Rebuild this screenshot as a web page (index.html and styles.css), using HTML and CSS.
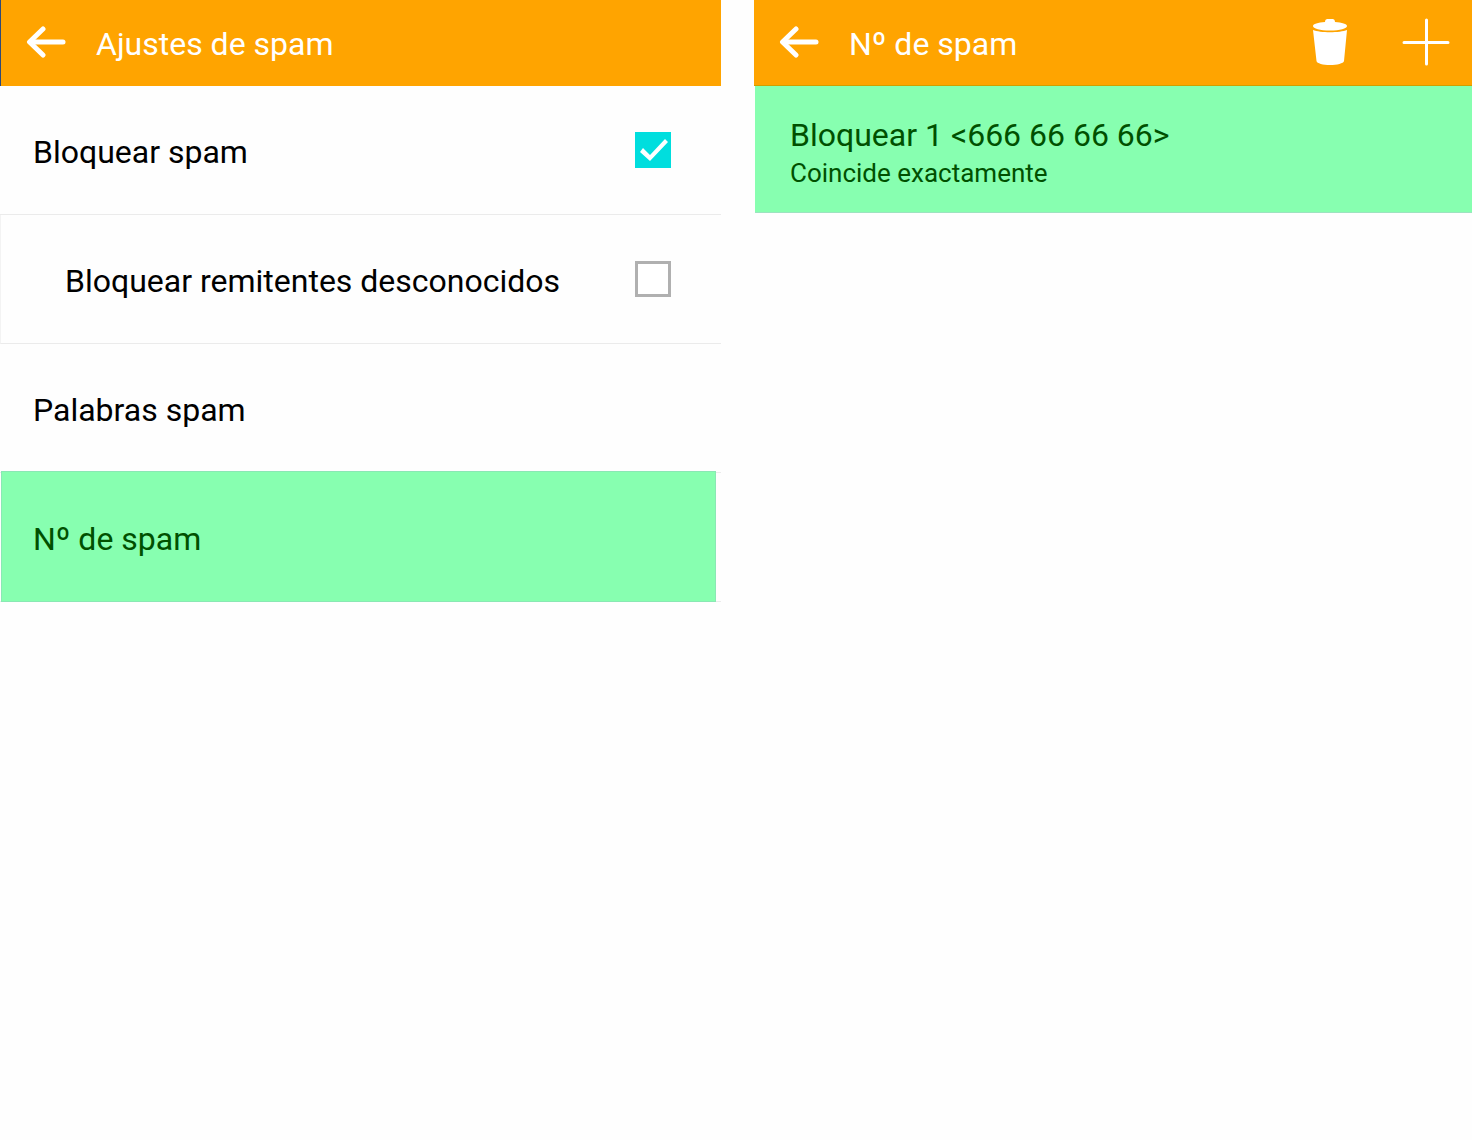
FILE: index.html
```html
<!DOCTYPE html>
<html lang="es">
<head>
    <meta charset="UTF-8">
    <meta name="viewport" content="width=device-width, initial-scale=1.0">
    <title>Ajustes de spam</title>
    <link rel="stylesheet" href="styles.css">
</head>
<body>
    <div class="screens">
        <section class="screen settings">
            <header class="bar">
                <button class="icon-button" type="button" aria-label="Atrás">
                    <svg width="40" height="32" viewBox="0 0 40 32" fill="none" stroke="#fff" stroke-linecap="round" stroke-linejoin="round">
                        <path d="M17 3 3.500 16 17 29" stroke-width="5"/>
                        <path d="M5 16H37" stroke-width="5"/>
                    </svg>
                </button>
                <h1>Ajustes de spam</h1>
            </header>
            <div class="row">
                <label for="block">Bloquear spam</label>
                <input class="check" type="checkbox" id="block" checked>
            </div>
            <div class="row row-nested">
                <label for="unknown">Bloquear remitentes desconocidos</label>
                <input class="check" type="checkbox" id="unknown">
            </div>
            <a class="row" href="#palabras">Palabras spam</a>
            <a class="row row-active" href="#numeros">Nº de spam</a>
        </section>

        <section class="screen numbers" id="numeros">
            <header class="bar">
                <button class="icon-button" type="button" aria-label="Atrás">
                    <svg width="40" height="32" viewBox="0 0 40 32" fill="none" stroke="#fff" stroke-linecap="round" stroke-linejoin="round">
                        <path d="M17 3 3.500 16 17 29" stroke-width="5"/>
                        <path d="M5 16H37" stroke-width="5"/>
                    </svg>
                </button>
                <h1>Nº de spam</h1>
                <div class="actions">
                    <button class="icon-button" type="button" aria-label="Eliminar">
                        <svg width="34" height="48" viewBox="0 0 34 48" fill="#fff">
                            <path d="M12 4C12 2 13 1 14.500 1H19.500C21 1 22 2 22 4C29 4.500 34 6 34 8C34 10.500 27 12.500 17 12.500S0 10.500 0 8C0 6 5 4.500 12 4Z"/>
                            <path d="M0 12C7 15 27 15 34 12L31 43C30.500 45.500 24 47 17 47S4 45.500 3.500 43Z"/>
                        </svg>
                    </button>
                    <button class="icon-button" type="button" aria-label="Añadir">
                        <svg width="48" height="48" viewBox="0 0 48 48" fill="none" stroke="#fff" stroke-width="3" stroke-linecap="round">
                            <path d="M24.500 2V46M2 24.500H46"/>
                        </svg>
                    </button>
                </div>
            </header>
            <a class="number" href="#numero-1">
                <span class="number-title">Bloquear 1 &lt;666 66 66 66&gt;</span>
                <span class="number-rule">Coincide exactamente</span>
            </a>
        </section>
    </div>
</body>
</html>
```
FILE: styles.css
```css
* {
    box-sizing: border-box;
}
body {
    margin: 0;
    background: #fefefe;
    color: #000;
    font-family: Roboto, "Noto Sans", sans-serif;
    font-size: 32px;
    line-height: 40px;
}
a {
    color: inherit;
    text-decoration: none;
}
.screens {
    display: grid;
    grid-template-columns: 721fr 718fr;
    gap: 33px;
    min-height: 100vh;
}

/* top bar */
.bar {
    display: flex;
    align-items: center;
    gap: 30px;
    height: 86px;
    padding: 0 22px 0 25px;
    background: #ffa400;
    color: #fff;
}
.settings .bar {
    border-left: 1px solid #2f4a78;
}
.bar h1 {
    margin: 0;
    padding-top: 2px;
    font-size: 32px;
    font-weight: 400;
}
.numbers .bar {
    border-bottom: 1px solid #d09f00;
}
.icon-button {
    display: flex;
    padding: 0 0 2px;
    border: 0;
    background: none;
    cursor: pointer;
}
.actions {
    display: flex;
    gap: 55px;
    margin-left: auto;
}

/* settings list */
.row {
    position: relative;
    display: flex;
    align-items: center;
    justify-content: space-between;
    height: 129px;
    padding: 4px 50px 0 33px;
    border-bottom: 1px solid #ebebeb;
}
.row-nested {
    padding-left: 64px;
    border-left: 1px solid #f3f3f3;
}
.row-active {
    z-index: 0;
    color: #005000;
}
.row-active::before {
    content: "";
    position: absolute;
    z-index: -1;
    inset: -2px 5px -1px 1px;
    background: #87ffb0;
    border: 1px solid #8ae8b4;
}
.check {
    appearance: none;
    width: 36px;
    height: 36px;
    margin: 0 0 4px;
    border: 3px solid #b0b0b0;
    background: #fff;
}
.check:checked {
    border: 0;
    background: #00dede;
}
.check:checked::after {
    content: "";
    display: block;
    width: 36px;
    height: 36px;
    background: #fff;
    clip-path: polygon(5px 20px, 8px 16px, 15px 23px, 30px 7px, 33px 10px, 15px 29px);
}

/* blocked numbers */
.number {
    display: flex;
    flex-direction: column;
    height: 127px;
    margin-left: 1px;
    padding: 29px 35px;
    background: #87ffb0;
    border-bottom: 1px solid #9de3c0;
    color: #005000;
}
.number-rule {
    font-size: 26px;
    line-height: 36px;
}
```
